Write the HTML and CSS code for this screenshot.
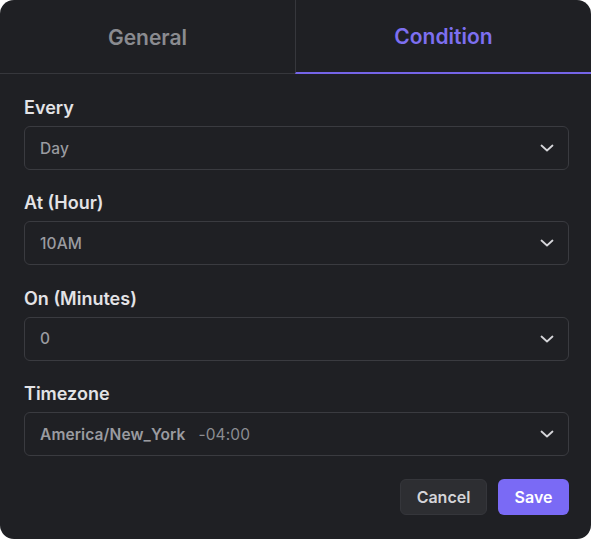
FILE: index.html
```html
<!DOCTYPE html>
<html>
<head>
<meta charset="utf-8">
<link rel="stylesheet" href="styles.css">
</head>
<body>
<div class="panel">
  <div class="tabs">
    <div class="tab">General</div>
    <div class="tab active">Condition</div>
  </div>
  <div class="content">
    <div class="field">
      <div class="label">Every</div>
      <div class="select"><span class="value">Day</span><svg class="chev" width="14" height="8" viewBox="0 0 14 8"><path d="M1.5 1.5 L7 6.5 L12.5 1.5" fill="none" stroke="#d6d6da" stroke-width="1.8" stroke-linecap="round" stroke-linejoin="round"/></svg></div>
    </div>
    <div class="field">
      <div class="label">At (Hour)</div>
      <div class="select"><span class="value">10AM</span><svg class="chev" width="14" height="8" viewBox="0 0 14 8"><path d="M1.5 1.5 L7 6.5 L12.5 1.5" fill="none" stroke="#d6d6da" stroke-width="1.8" stroke-linecap="round" stroke-linejoin="round"/></svg></div>
    </div>
    <div class="field">
      <div class="label">On (Minutes)</div>
      <div class="select"><span class="value">0</span><svg class="chev" width="14" height="8" viewBox="0 0 14 8"><path d="M1.5 1.5 L7 6.5 L12.5 1.5" fill="none" stroke="#d6d6da" stroke-width="1.8" stroke-linecap="round" stroke-linejoin="round"/></svg></div>
    </div>
    <div class="field">
      <div class="label">Timezone</div>
      <div class="select"><span class="value tz">America/New_York<span class="offset">-04:00</span></span><svg class="chev" width="14" height="8" viewBox="0 0 14 8"><path d="M1.5 1.5 L7 6.5 L12.5 1.5" fill="none" stroke="#d6d6da" stroke-width="1.8" stroke-linecap="round" stroke-linejoin="round"/></svg></div>
    </div>
    <div class="actions">
      <button class="btn cancel">Cancel</button>
      <button class="btn save">Save</button>
    </div>
  </div>
</div>
</body>
</html>
```
FILE: styles.css
```css
html, body {
  margin: 0;
  padding: 0;
  background: #ffffff;
}
body {
  font-family: Inter, "Noto Sans", sans-serif;
}
.panel {
  width: 591px;
  height: 539px;
  background: #1f2024;
  border-radius: 14px;
  overflow: hidden;
  box-sizing: border-box;
}
.tabs {
  display: flex;
  height: 74px;
  border-bottom: 1px solid #36373c;
  box-sizing: border-box;
}
.tab {
  flex: 1;
  display: flex;
  align-items: center;
  justify-content: center;
  font-size: 21px;
  font-weight: 600;
  color: #8a8b90;
  padding-top: 1px;
  box-sizing: border-box;
}
.tab + .tab {
  border-left: 1px solid #36373c;
}
.tab.active {
  color: #7d6ff0;
  border-bottom: 2px solid #7565e8;
  margin-bottom: -1px;
}
.content {
  padding: 21px 22px 0 24px;
  display: flex;
  flex-direction: column;
}
.field {
  display: flex;
  flex-direction: column;
  gap: 6px;
  margin-bottom: 20px;
}
.field:nth-child(2), .field:nth-child(3) {
  margin-bottom: 20.5px;
}
.label {
  font-size: 18px;
  line-height: 24px;
  padding-top: 1px;
  font-weight: 600;
  color: #e3e3e6;
}
.select {
  height: 44px;
  border: 1px solid #3a3b40;
  border-radius: 6px;
  box-sizing: border-box;
  display: flex;
  align-items: center;
  justify-content: space-between;
  padding: 0 14px 0 15px;
  background: #1f2024;
}
.value {
  font-size: 15.5px;
  color: #9a9ba0;
  font-weight: 500;
  letter-spacing: 0.1px;
}
.tz {
  font-weight: 600;
}
.offset {
  font-weight: 400;
  margin-left: 13px;
  color: #8c8d92;
}
.chev {
  display: block;
}
.actions {
  display: flex;
  justify-content: flex-end;
  gap: 11px;
  margin-top: 3px;
}
.btn {
  height: 36px;
  border-radius: 6px;
  font-family: Inter, "Noto Sans", sans-serif;
  font-size: 16px;
  font-weight: 600;
  box-sizing: border-box;
  cursor: pointer;
}
.cancel {
  width: 87px;
  background: #2d2e32;
  border: 1px solid #35363b;
  color: #d4d4d8;
}
.save {
  width: 71px;
  background: #7a6af5;
  border: none;
  color: #ffffff;
}
```
